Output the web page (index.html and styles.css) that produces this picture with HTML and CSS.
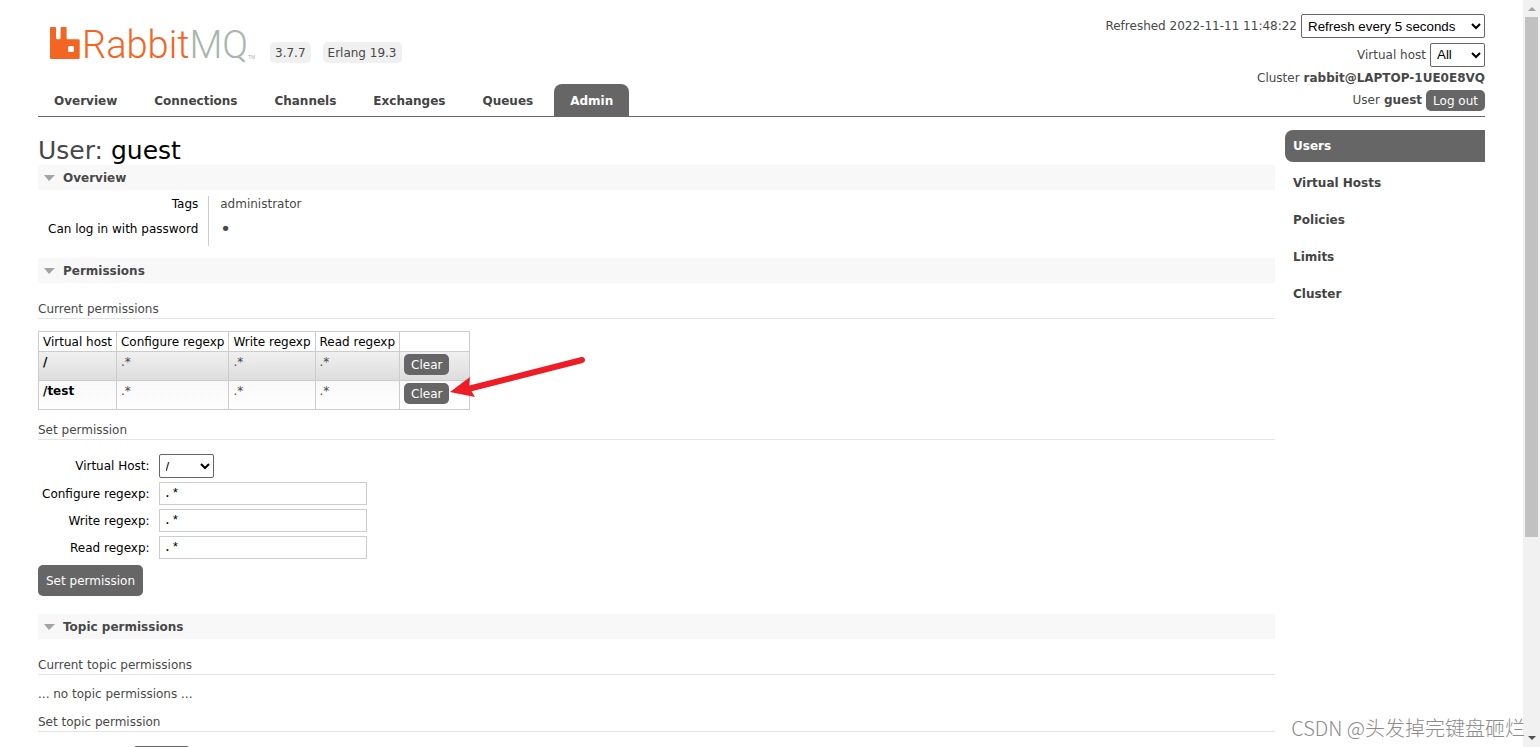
FILE: index.html
```html
<!DOCTYPE html>
<html lang="en">
<head>
<meta charset="utf-8">
<title>RabbitMQ Management</title>
<link rel="stylesheet" href="styles.css">
</head>
<body>
<div class="viewport">
  <div class="page">
    <header class="header">
      <div class="brand-area">
        <div class="brand">
          <a class="logo" href="#" aria-label="RabbitMQ">
            <svg width="204" height="44" viewBox="0 0 204 44">
              <path fill="#f26522" d="M1 5h4q1 0 1 1v10q0 1.300 1.300 1.300h2q1.300 0 1.300-1.300V6q0-1 1-1h4q1 0 1 1v10q0 1.300 1.300 1.300h10.500q1.300 0 1.300 1.300V36q0 1-1 1H1q-1 0-1-1V6q0-1 1-1z"/>
              <rect x="18" y="24" width="6" height="6" rx="1.500" fill="#fff"/>
              <text class="logo-text" x="32" y="36"><tspan class="logo-rabbit">Rabbit</tspan><tspan class="logo-mq">MQ</tspan></text>
              <text class="logo-tm" x="198" y="37">TM</text>
            </svg>
          </a>
          <span class="version">3.7.7</span>
          <span class="version">Erlang 19.3</span>
        </div>
        <nav class="tabs">
          <a href="#">Overview</a>
          <a href="#">Connections</a>
          <a href="#">Channels</a>
          <a href="#">Exchanges</a>
          <a href="#">Queues</a>
          <a href="#" class="selected">Admin</a>
        </nav>
      </div>
      <div class="status">
        <div class="status-row refresh-row"><label for="refresh">Refreshed 2022-11-11 11:48:22</label>
          <select id="refresh" class="select refresh-select"><option>Refresh every 5 seconds</option></select></div>
        <div class="status-row vhost-row"><label for="vhost-filter">Virtual host</label>
          <select id="vhost-filter" class="select small-select"><option>All</option></select></div>
        <div class="status-row">Cluster <b>rabbit@LAPTOP-1UE0E8VQ</b></div>
        <div class="status-row">User <b>guest</b> <button class="button small">Log out</button></div>
      </div>
    </header>

    <div class="columns">
      <main class="main">
        <h1>User: <b>guest</b></h1>

        <section class="section overview">
          <h2><span class="triangle"></span>Overview</h2>
          <table class="facts">
            <tr><th>Tags</th><td>administrator</td></tr>
            <tr><th>Can log in with password</th><td class="dot">•</td></tr>
          </table>
        </section>

        <section class="section permissions">
          <h2><span class="triangle"></span>Permissions</h2>
          <h3 class="first">Current permissions</h3>
          <div class="table-wrap">
            <table class="list">
              <thead>
                <tr><th>Virtual host</th><th>Configure regexp</th><th>Write regexp</th><th>Read regexp</th><th class="action"></th></tr>
              </thead>
              <tbody>
                <tr><td><a href="#">/</a></td><td>.*</td><td>.*</td><td>.*</td><td class="action"><button class="button small">Clear</button></td></tr>
                <tr><td><a href="#">/test</a></td><td>.*</td><td>.*</td><td>.*</td><td class="action"><button class="button small">Clear</button></td></tr>
              </tbody>
            </table>
            <svg class="arrow" width="136" height="44" viewBox="0 0 136 44">
              <path d="M132 5L18 34" stroke="#ee1c24" stroke-width="6" stroke-linecap="round"/>
              <path d="M0 37L20 22L19 32L25 42z" fill="#ee1c24"/>
            </svg>
          </div>
          <h3 class="follow">Set permission</h3>
          <form class="form">
            <label for="vhost">Virtual Host:</label>
            <select id="vhost" class="select small-select"><option>/</option></select>
            <label for="configure">Configure regexp:</label>
            <input id="configure" type="text" value=".*">
            <label for="write">Write regexp:</label>
            <input id="write" type="text" value=".*">
            <label for="read">Read regexp:</label>
            <input id="read" type="text" value=".*">
          </form>
          <button class="button">Set permission</button>
        </section>

        <section class="section">
          <h2><span class="triangle"></span>Topic permissions</h2>
          <h3 class="first">Current topic permissions</h3>
          <p class="empty">... no topic permissions ...</p>
          <h3 class="follow">Set topic permission</h3>
          <form class="form topic-form">
            <label for="topic-vhost">Virtual Host:</label>
            <select id="topic-vhost" class="select small-select"><option>/</option></select>
          </form>
        </section>
      </main>

      <nav class="side">
        <a href="#" class="selected">Users</a>
        <a href="#">Virtual Hosts</a>
        <a href="#">Policies</a>
        <a href="#">Limits</a>
        <a href="#">Cluster</a>
      </nav>
    </div>
  </div>
  <div class="scrollbar">
    <span class="scroll-up"></span>
    <span class="thumb"></span>
    <span class="scroll-down"></span>
  </div>
  <div class="watermark">CSDN @头发掉完键盘砸烂</div>
</div>
</body>
</html>
```

FILE: styles.css
```css
* { box-sizing: border-box; }

body {
  margin: 0;
  color: #484848;
  background: #fff;
  font: 12px/16px Verdana, "DejaVu Sans", sans-serif;
}

a { color: #444; text-decoration: none; font-weight: bold; }

.viewport {
  position: relative;
  display: flex;
  height: 100vh;
  overflow: hidden;
}

.page {
  flex: 1;
  padding: 14px 38px 0;
  overflow: hidden;
}

/* Header */
.header {
  display: flex;
  justify-content: space-between;
  border-bottom: 1px solid #666;
}
.brand-area {
  display: flex;
  flex-direction: column;
  justify-content: space-between;
}
.brand {
  display: flex;
  align-items: flex-end;
  gap: 12px;
  padding: 8px 0 0 12px;
}
.logo { display: block; height: 44px; margin-right: 4px; }
.logo svg { display: block; overflow: visible; }
.logo-text { font: 300 38px Roboto, "Liberation Sans", sans-serif; }
.logo-rabbit { fill: #f26522; }
.logo-mq { fill: #a9b5ae; }
.logo-tm { font: 5px "Liberation Sans", sans-serif; fill: #a9b5ae; }
.version {
  height: 21px;
  padding: 3px 5px 2px;
  margin-bottom: 3px;
  background: #f0f0f0;
  border-radius: 5px;
}
.tabs { display: flex; gap: 5px; }
.tabs a {
  height: 32px;
  padding: 9px 16px 7px;
  border-radius: 8px 8px 0 0;
}
.tabs .selected, .side .selected { background: #666; color: #fff; }

.status { display: flex; flex-direction: column; align-items: flex-end; padding-bottom: 5px; }
.status-row { display: flex; align-items: center; gap: 4px; height: 22px; }
.refresh-row { height: 24px; margin-bottom: 4px; }
.vhost-row { height: 25px; }

.select {
  height: 24px;
  padding: 2px;
  border: 1px solid #666;
  border-radius: 2px;
  background-color: #fff;
  color: #000;
  font-family: Arial, "Liberation Sans", sans-serif;
}
.refresh-select { width: 184px; }
.small-select { width: 55px; }

.button {
  padding: 8px 8px 7px;
  border: 0;
  border-radius: 5px;
  background: #666;
  color: #fff;
  font: inherit;
}
.button.small { padding: 3px 7px 2px; }

/* Body */
.columns { display: flex; gap: 10px; padding-top: 13px; }
.main { flex: 1; }

h1 {
  margin: 0;
  padding-top: 7px;
  font-size: 25px;
  line-height: 28px;
  font-weight: normal;
}
h1 b { font-weight: normal; color: #000; }

.section { margin-bottom: 18px; }
.section.overview { margin-bottom: 12px; }
h2 {
  display: flex;
  align-items: center;
  gap: 8px;
  height: 25px;
  margin: 0;
  padding-left: 6px;
  background: #f8f8f8;
  font-size: 12px;
}
.triangle {
  border: solid transparent;
  border-width: 6px 6px 0 5px;
  border-top-color: #a3a3a3;
}
h3 {
  margin: 0;
  padding-bottom: 1px;
  border-bottom: 1px solid #e4e4e4;
  font-size: 12px;
  font-weight: normal;
}
h3.first { margin: 18px 0 12px; }
h3.follow { margin: 12px 0 14px; }

.facts { margin-top: 6px; border-collapse: collapse; }
.facts th, .facts td { height: 25px; padding: 0 10px; vertical-align: top; font-weight: normal; }
.facts th { color: #000; text-align: right; border-right: 1px solid #ccc; }
.facts td { padding-left: 11px; }
.facts .dot { font-size: 18px; }

.table-wrap { position: relative; }
.list { border-collapse: collapse; }
.list th, .list td {
  padding: 2px 4px 1px;
  border: 1px solid #ccc;
  text-align: left;
  vertical-align: top;
  font-weight: normal;
}
.list th { color: #000; }
.list td { height: 29px; }
.list .action { width: 70px; }
.list a { color: #000; }
.list tbody tr:nth-child(odd) { background: linear-gradient(#f0f0f0, #dcdcdc); }
.list tbody tr:nth-child(even) { background: linear-gradient(#f8f8f8, #fff); }
.arrow { position: absolute; left: 412px; top: 24px; }

.form {
  display: grid;
  grid-template-columns: auto 1fr;
  justify-items: start;
  align-items: center;
  gap: 4px 9px;
  margin-bottom: 6px;
  padding-left: 4px;
}
.topic-form { grid-template-columns: 83px 1fr; }
.form label { justify-self: end; color: #000; }
.form input {
  width: 208px;
  height: 23px;
  padding: 2px 4px;
  border: 1px solid #ccc;
  font: 13px "Liberation Mono", monospace;
}
.empty { margin: 0; line-height: 15px; }

/* Side menu */
.side { width: 200px; display: flex; flex-direction: column; gap: 5px; }
.side a { padding: 8px; border-radius: 8px 0 0 8px; }

/* Window edge */
.scrollbar {
  display: flex;
  flex-direction: column;
  align-items: center;
  width: 17px;
  padding: 7px 0;
  background: #f1f1f1;
}
.thumb { width: 13px; height: 71%; margin-top: 6px; background: #c1c1c1; }
.scroll-up, .scroll-down { border: 4px solid transparent; }
.scroll-up { border-top: 0; border-bottom-color: #a3a3a3; }
.scroll-down { margin-top: auto; border-bottom: 0; border-top-color: #505050; }

.watermark {
  position: absolute;
  right: 15px;
  bottom: 5px;
  color: #8c8c8c;
  font: 300 20px/28px "Noto Sans CJK SC", sans-serif;
}
```
